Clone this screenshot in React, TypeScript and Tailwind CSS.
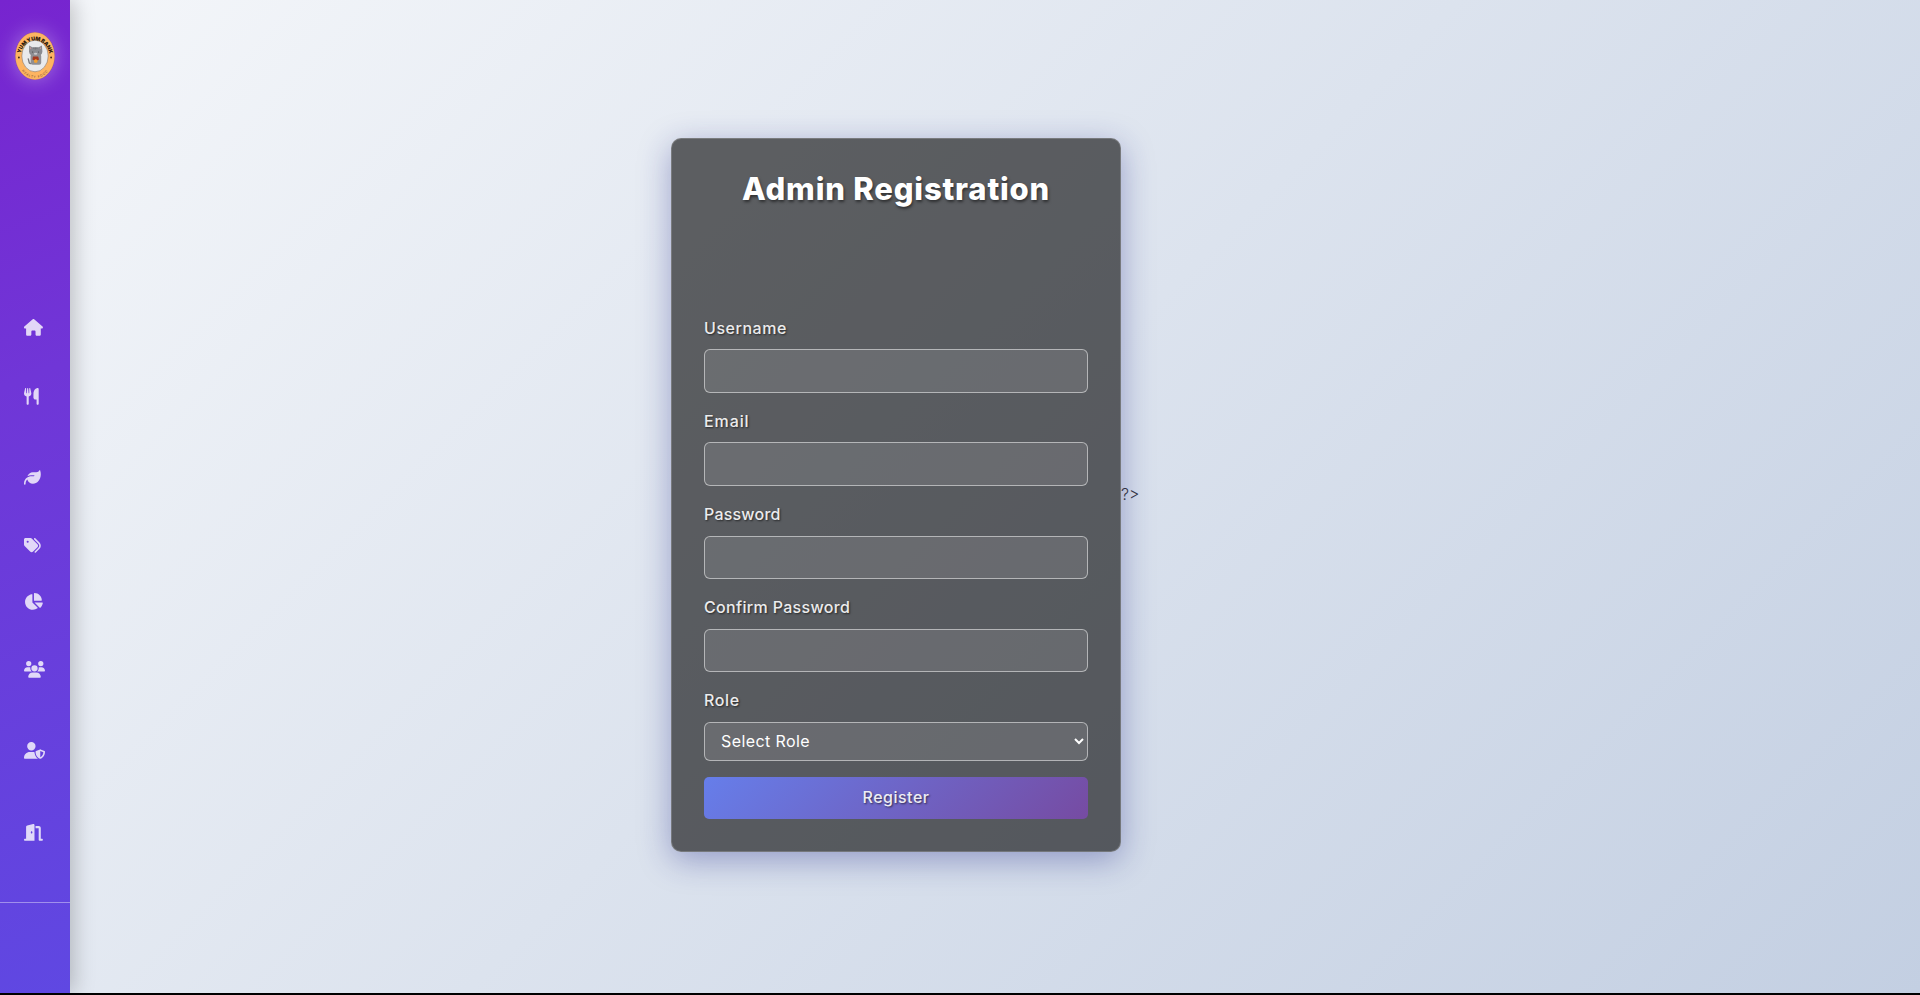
import {
  FaHouse,
  FaUtensils,
  FaLeaf,
  FaTags,
  FaChartPie,
  FaUsers,
  FaUserShield,
  FaDoorOpen,
} from "react-icons/fa6";

function Logo() {
  return (
    <svg
      viewBox="0 0 40 48"
      className="h-12 w-10 rounded-[50%] shadow-[0_0_20px_rgba(255,255,255,0.35)]"
      fontFamily="Inter, 'Liberation Sans', sans-serif"
      textAnchor="middle"
    >
      <defs>
        <path id="logo-top" d="M5.4 30 A14.9 18 0 1 1 34.6 30" />
        <path id="logo-bottom" d="M2.5 25 A17.5 21 0 0 0 37.5 25" />
      </defs>
      <ellipse cx="20" cy="24" rx="19.7" ry="23.7" fill="#fdb462" stroke="#c98a60" strokeWidth=".5" />
      <ellipse cx="20" cy="24" rx="13.2" ry="15.8" fill="#e9eaec" stroke="#7a6350" strokeWidth=".5" />
      <text fontSize="5.3" fontWeight="900" letterSpacing="-.2" fill="#2b1a10">
        <textPath href="#logo-top" startOffset="50%">YUM YUM BANK</textPath>
      </text>
      <text fontSize="3.2" letterSpacing=".8" fill="#6b4526">
        <textPath href="#logo-bottom" startOffset="50%">HEALTY FOOD</textPath>
      </text>
      <circle cx="3.9" cy="25.5" r=".9" fill="#3b2415" />
      <circle cx="36.1" cy="25.5" r=".9" fill="#3b2415" />
      <path d="M16 31.5 C13 32 14.5 27.5 12.8 26.5" fill="none" stroke="#77777b" strokeWidth="1.4" />
      <path d="M14.2 13.6 L17.3 15.2 H23.7 L26.9 13.6 L27.4 19.5 Q27.3 24 21 24.4 Q14.2 24 14 19.5 Z" fill="#8a8b90" />
      <rect x="15.6" y="22" width="10.6" height="10.8" rx="2" fill="#8f8e92" />
      <path d="M15 15 l1.5 1.2 l-1.2 1z M26.2 15 l-1.5 1.2 l1.2 1z" fill="#d99a9a" />
      <path d="M20.3 15.3v2.2 M18.8 15.5v1.4 M21.9 15.5v1.4" stroke="#55565a" strokeWidth=".5" />
      <circle cx="17.6" cy="20" r=".6" fill="#444" />
      <circle cx="23.6" cy="20" r=".6" fill="#444" />
      <ellipse cx="20.6" cy="21.8" rx="1.8" ry="1" fill="#c9c9cc" />
      <path d="M18 24.4 L23.2 24.6 L24 27.6 L21 29.4 L17.4 27.4 Z" fill="#a63a20" />
      <path d="M18.8 28.4 L20.8 27 L22.8 28.6 L22 30.8 H19.4 Z" fill="#f0a030" />
    </svg>
  );
}

function Sidebar() {
  return (
    <aside className="relative z-10 flex h-full w-[70px] shrink-0 flex-col bg-[linear-gradient(160deg,#7724cf_0%,#7036d7_38%,#5f48e2_100%)] shadow-[4px_0_20px_rgba(0,0,0,0.22)]">
      <div className="flex h-[319px] shrink-0 justify-center pt-8">
        <Logo />
      </div>
      <nav className="flex h-[584px] shrink-0 flex-col items-start border-b border-white/40 pl-6 text-white/80">
        <FaHouse className="h-[16.8px] w-[18.9px] shrink-0" />
        <FaUtensils className="mt-[52.2px] h-[16.8px] w-[14.7px] shrink-0" />
        <FaLeaf className="mt-[64.2px] h-[16.8px] w-[16.8px] shrink-0" />
        <FaTags className="mt-[51.2px] h-[16.8px] w-[16.8px] shrink-0" />
        <FaChartPie className="mt-[39.4px] h-[16.8px] w-[18.9px] shrink-0" />
        <FaUsers className="mt-[51.2px] h-[16.8px] w-[21px] shrink-0" />
        <FaUserShield className="mt-[64.2px] h-[16.8px] w-[21px] shrink-0" />
        <FaDoorOpen className="mt-[65.2px] h-[16.8px] w-[18.9px] shrink-0" />
      </nav>
    </aside>
  );
}

const textShadow = "[text-shadow:1px_1px_2px_rgba(0,0,0,0.6)]";

const fields = [
  { id: "username", label: "Username", type: "text", spacing: "tracking-[0.55px]" },
  { id: "email", label: "Email", type: "email", spacing: "tracking-[0.9px]" },
  { id: "password", label: "Password", type: "password", spacing: "tracking-[0.2px]" },
  { id: "confirm", label: "Confirm Password", type: "password", spacing: "tracking-[0.33px]" },
];

export default function App() {
  return (
    <div className="flex h-[995px] w-full flex-col overflow-hidden bg-black font-['Inter','Liberation_Sans',sans-serif] text-base leading-[25.6px]">
      <div className="flex h-[993px] bg-[linear-gradient(135deg,#f5f7fa_0%,#c3cfe2_100%)]">
        <Sidebar />
        <main className="flex min-w-0 flex-1 items-center pb-[3px] pl-[601px]">
          <form className="flex h-[713.2px] w-[450px] flex-col rounded-[10px] border border-white/[0.18] bg-black/60 p-8 text-white shadow-[0_8px_32px_rgba(31,38,135,0.37)]">
            <h2 className="h-[144.6px] text-center text-[31px] leading-[35px] font-extrabold tracking-[0.8px] whitespace-nowrap [text-shadow:1px_2px_3px_rgba(0,0,0,0.5)]">
              Admin Registration
            </h2>
            {fields.map((f) => (
              <div key={f.id} className="mb-4 flex flex-col gap-2">
                <label htmlFor={f.id} className={`self-start font-medium text-white/90 ${textShadow} ${f.spacing}`}>
                  {f.label}
                </label>
                <input
                  id={f.id}
                  type={f.type}
                  className="h-[43.6px] w-full rounded-md border border-white/50 bg-white/10 px-4"
                />
              </div>
            ))}
            <label htmlFor="role" className={`mb-2 self-start font-medium tracking-[0.6px] text-white/90 ${textShadow}`}>
              Role
            </label>
            <select
              id="role"
              className="mb-4 h-[38.6px] w-full shrink-0 rounded-md border border-white/50 bg-white/10 px-3 tracking-[0.4px] text-white"
            >
              <option>Select Role</option>
            </select>
            <button
              type="button"
              className="h-[42px] w-full shrink-0 rounded-[5px] bg-[linear-gradient(135deg,#667eea_0%,#764ba2_100%)] font-medium tracking-[0.5px] text-white/90 [text-shadow:1px_1px_2px_rgba(0,0,0,0.6)]"
            >
              Register
            </button>
          </form>
          <span className="font-light text-[#333344]">?&gt;</span>
        </main>
      </div>
    </div>
  );
}
